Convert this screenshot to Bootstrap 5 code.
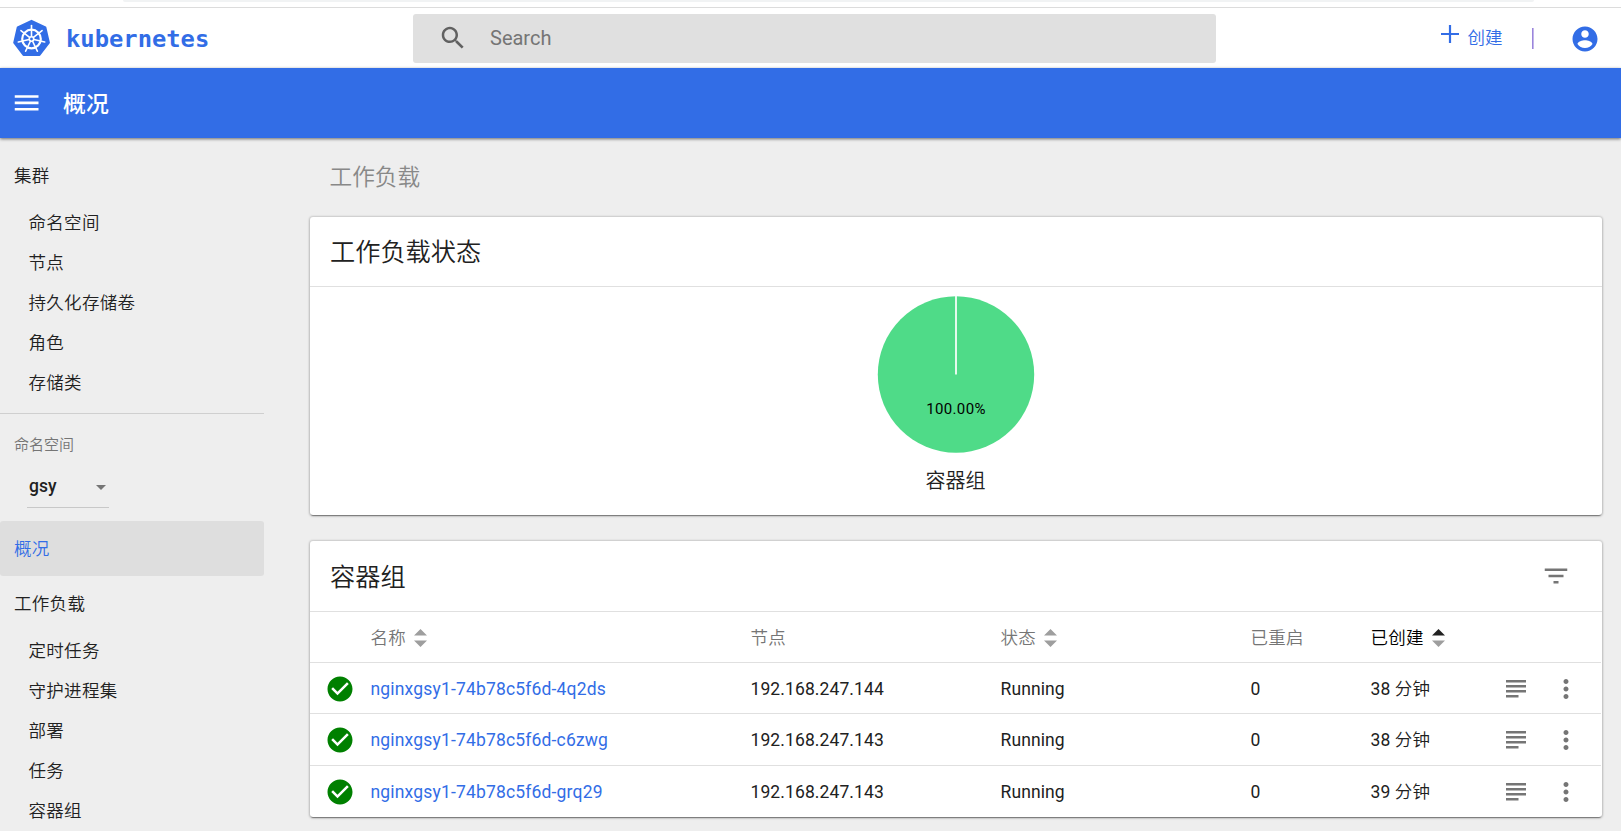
<!DOCTYPE html>
<html lang="zh-CN">
<head>
<meta charset="utf-8">
<title>Kubernetes Dashboard</title>
<link href="https://cdn.jsdelivr.net/npm/bootstrap@5.3.0/dist/css/bootstrap.min.css" rel="stylesheet">
<style>
:root{--kd-blue:#326de6}
body{font-family:Roboto,"Noto Sans CJK SC",sans-serif;font-size:17.5px;line-height:20px;background:#eee;color:#212121;height:831px;overflow:hidden}
svg{display:block;flex:none}
.kd-blue{color:var(--kd-blue)}
.kd-thin{font-weight:350}
.browser-edge{height:8px;border-bottom:1px solid #dcdcdc;background:#fff;padding:0 87px 0 123px}
.browser-edge div{height:2px;background:#f1f3f4;border-radius:0 0 8px 8px}
.top-header{height:60px;background:#fff;padding-left:12px;padding-right:21px}
.brand-text{font:bold 23.8px/30px "DejaVu Sans Mono",monospace;color:var(--kd-blue);margin-left:15px;padding-top:2px;width:347px}
.search-box{width:803px;height:49px;background:#e0e0e0;border-radius:3px;padding-left:25px;color:#757575;font-size:20px}
.title-bar{height:70px;background:var(--kd-blue);color:#fff;padding-left:11px;box-shadow:0 1px 3px rgba(0,0,0,.55);position:relative}
.title-bar h1{font-size:22.9px;font-weight:500;line-height:30px;margin:0 0 0 22px;padding-top:3px}
.side-nav{width:264px;padding-top:10px}
.side-nav a{display:flex;align-items:center;color:#212121;text-decoration:none;font-weight:350;letter-spacing:.3px}
.side-nav .group-link{height:55px;padding-left:14px}
.side-nav .sub-link{height:40px;padding-left:28.5px}
.side-nav .chosen{background:#dedede;border-radius:3px;color:var(--kd-blue)}
.ns-label{font-size:15px;color:#757575;height:20px;margin:21px 0 0 14px}
.ns-select{width:82px;height:40px;margin:13px 0 13px 27px;border-bottom:1px solid #c8c8c8;padding:0 3px 4px 2px;font-weight:500}
.content-col{width:1292px;margin-left:45.5px}
.section-title{font-size:22.7px;line-height:30px;color:#888;margin:25px 0 24px 20px;font-weight:350}
.kd-card{background:#fff;border-radius:3px;box-shadow:0 0 2px 1px rgba(0,0,0,.13),0 1px 3px rgba(0,0,0,.2),0 2px 1px -1px rgba(0,0,0,.35)}
.kd-card-head{height:70px;border-bottom:1px solid #e0e0e0;padding:0 30.5px 0 20.5px}
.kd-card-head h2{font-size:25.2px;line-height:30px;margin:0;padding-top:3px;font-weight:350}
.pod-card .kd-card-head{height:71px}
.pod-table{table-layout:fixed;width:1291px;border-collapse:separate;border-spacing:0;letter-spacing:.1px}
.pod-table td,.pod-table th{padding:0;vertical-align:middle;border-bottom:1px solid #e0e0e0;white-space:nowrap;height:51px}
.pod-table th{padding-top:2px}
.pod-table td{padding-top:1px}
.pod-table tr:nth-child(2) td{height:52px}
.pod-table tr:last-child td{border-bottom:0}
.pod-table th{font-weight:350;color:#757575;letter-spacing:.2px}
.pod-table th.sorted{color:#000}
.pod-table a{text-decoration:none;color:var(--kd-blue);letter-spacing:.17px}
.status-icon{margin-left:15px}
</style>
</head>
<body>
<svg width="0" height="0" class="d-none">
  <symbol id="i-check" viewBox="0 0 24 24"><path d="M12 2C6.48 2 2 6.48 2 12s4.48 10 10 10 10-4.48 10-10S17.52 2 12 2zm-2 15l-5-5 1.41-1.41L10 14.17l7.59-7.59L19 8l-9 9z"/></symbol>
  <symbol id="i-log" viewBox="0 0 24 24"><path d="M4 4.8h16v2H4zM4 8.8h16v2H4zM4 12.8h16v2H4zM4 16.8h10v2H4z"/></symbol>
  <symbol id="i-more" viewBox="0 0 24 24"><path d="M12 8c1.1 0 2-.9 2-2s-.9-2-2-2-2 .9-2 2 .9 2 2 2zm0 2c-1.1 0-2 .9-2 2s.9 2 2 2 2-.9 2-2-.9-2-2-2zm0 6c-1.1 0-2 .9-2 2s.9 2 2 2 2-.9 2-2-.9-2-2-2z"/></symbol>
</svg>

<div class="browser-edge"><div></div></div>

<header class="top-header d-flex align-items-center">
  <svg width="39" height="40" viewBox="0 0 39 40">
    <path fill="#326de6" stroke="#326de6" stroke-width="2" stroke-linejoin="round" d="M19.5 2.8 33.4 9.4 36.9 24.6 27.5 37 11.5 37 2.2 24.6 5.7 9.4z"/>
    <g fill="none" stroke="#fff" stroke-linecap="round">
      <circle cx="19.5" cy="21" r="9.3" stroke-width="2.2"/>
      <g stroke-width="1.6">
        <path id="spoke" d="M19.5 18.5V7.5"/>
        <use href="#spoke" transform="rotate(51.43 19.5 21)"/><use href="#spoke" transform="rotate(102.86 19.5 21)"/>
        <use href="#spoke" transform="rotate(154.29 19.5 21)"/><use href="#spoke" transform="rotate(205.71 19.5 21)"/>
        <use href="#spoke" transform="rotate(257.14 19.5 21)"/><use href="#spoke" transform="rotate(308.57 19.5 21)"/>
      </g>
      <circle cx="19.5" cy="21" r="2.2" stroke-width="1.6"/>
    </g>
  </svg>
  <div class="brand-text">kubernetes</div>
  <div class="search-box d-flex align-items-center">
    <svg width="30" height="30" viewBox="0 0 24 24" fill="#616161"><path d="M15.5 14h-.79l-.28-.27C15.41 12.59 16 11.11 16 9.5 16 5.91 13.09 3 9.5 3S3 5.91 3 9.5 5.91 16 9.5 16c1.61 0 3.09-.59 4.23-1.57l.27.28v.79l5 4.99L20.49 19l-4.99-5zm-6 0C7.01 14 5 11.99 5 9.5S7.01 5 9.5 5 14 7.01 14 9.5 11.99 14 9.5 14z"/></svg>
    <span style="margin-left:22px">Search</span>
  </div>
  <div class="ms-auto d-flex align-items-center kd-blue">
    <svg class="mb-2" width="18" height="18" viewBox="0 0 18 18" stroke="currentColor" stroke-width="2.2"><path d="M9 0v18M0 9h18"/></svg>
    <span class="kd-thin" style="margin-left:8.5px">创建</span>
    <svg width="2" height="21" style="margin-left:29.5px"><path fill="#9b85dc" d="M0 0h1.6v21H0z"/></svg>
    <svg style="margin-left:36px;margin-top:2px" width="30" height="30" viewBox="0 0 24 24" fill="currentColor"><path d="M12 2C6.48 2 2 6.48 2 12s4.48 10 10 10 10-4.48 10-10S17.52 2 12 2zm0 3c1.66 0 3 1.34 3 3s-1.34 3-3 3-3-1.34-3-3 1.34-3 3-3zm0 14.2c-2.5 0-4.71-1.28-6-3.22.03-1.99 4-3.08 6-3.08 1.99 0 5.97 1.09 6 3.08-1.29 1.94-3.5 3.22-6 3.22z"/></svg>
  </div>
</header>

<div class="title-bar d-flex align-items-center">
  <svg width="30" height="30" viewBox="0 0 24 24" fill="#fff"><path d="M3 18h19v-2.1H3V18zm0-5.1h19v-2.1H3v2.1zM3 5.7v2.1h19V5.7H3z"/></svg>
  <h1>概况</h1>
</div>

<div class="d-flex">
  <nav class="side-nav">
    <a class="group-link" href="#">集群</a>
    <a class="sub-link" href="#">命名空间</a>
    <a class="sub-link" href="#">节点</a>
    <a class="sub-link" href="#">持久化存储卷</a>
    <a class="sub-link" href="#">角色</a>
    <a class="sub-link" href="#">存储类</a>
    <div class="border-bottom" style="height:11px;--bs-border-color:#cfcfcf"></div>
    <div class="ns-label kd-thin">命名空间</div>
    <div class="ns-select d-flex align-items-center justify-content-between"><span>gsy</span>
      <svg class="mt-1" width="10" height="5" viewBox="0 0 10 5"><path fill="#757575" d="M0 0h10L5 5z"/></svg></div>
    <a class="group-link chosen" href="#">概况</a>
    <a class="group-link" href="#">工作负载</a>
    <a class="sub-link" href="#">定时任务</a>
    <a class="sub-link" href="#">守护进程集</a>
    <a class="sub-link" href="#">部署</a>
    <a class="sub-link" href="#">任务</a>
    <a class="sub-link" href="#">容器组</a>
  </nav>

  <main class="content-col">
    <div class="section-title">工作负载</div>
    <section class="kd-card" style="height:298px">
      <div class="kd-card-head d-flex align-items-center"><h2>工作负载状态</h2></div>
      <div class="d-flex flex-column align-items-center" style="padding-top:9px">
        <svg width="158" height="158" viewBox="0 0 158 158">
          <circle cx="79" cy="78.5" r="78.2" fill="#4fdb88"/>
          <path d="M79 0v78.5" stroke="#fff" stroke-width="1.7"/>
          <text x="79" y="118" text-anchor="middle" font-family="Roboto" font-size="15" letter-spacing=".35" fill="#000">100.00%</text>
        </svg>
        <div class="kd-thin" style="font-size:20px;line-height:24px;margin-top:15px">容器组</div>
      </div>
    </section>

    <section class="kd-card pod-card" style="height:276px;margin-top:26px">
      <div class="kd-card-head d-flex align-items-center justify-content-between"><h2>容器组</h2>
        <svg width="30" height="30" viewBox="0 0 24 24" fill="#757575"><path d="M10 18h4v-2h-4v2zM3 6v2h18V6H3zm3 7h12v-2H6v2z"/></svg></div>
      <table class="pod-table">
        <colgroup><col style="width:61px"><col style="width:380px"><col style="width:250px"><col style="width:250px"><col style="width:120px"><col style="width:130px"><col style="width:50px"><col style="width:50px"></colgroup>
        <thead><tr>
          <th></th>
          <th><div class="d-flex align-items-center">名称<svg style="margin-left:8px" width="13" height="18" viewBox="0 0 13 18"><path fill="#9e9e9e" d="M0 6.5h13L6.5 0zM0 11.5h13L6.5 18z"/></svg></div></th>
          <th>节点</th>
          <th><div class="d-flex align-items-center">状态<svg style="margin-left:8px" width="13" height="18" viewBox="0 0 13 18"><path fill="#9e9e9e" d="M0 6.5h13L6.5 0zM0 11.5h13L6.5 18z"/></svg></div></th>
          <th>已重启</th>
          <th class="sorted"><div class="d-flex align-items-center">已创建<svg style="margin-left:8px" width="13" height="18" viewBox="0 0 13 18"><path fill="#212121" d="M0 6.5h13L6.5 0z"/><path fill="#9e9e9e" d="M0 11.5h13L6.5 18z"/></svg></div></th>
          <th></th><th></th>
        </tr></thead>
        <tbody>
        <tr>
          <td><svg class="status-icon" width="30" height="30" fill="#008000"><use href="#i-check"/></svg></td>
          <td><a href="#">nginxgsy1-74b78c5f6d-4q2ds</a></td><td>192.168.247.144</td><td>Running</td><td>0</td><td>38 <span class="kd-thin">分钟</span></td>
          <td><svg width="30" height="30" fill="#757575"><use href="#i-log"/></svg></td>
          <td><svg width="30" height="30" fill="#757575"><use href="#i-more"/></svg></td>
        </tr>
        <tr>
          <td><svg class="status-icon" width="30" height="30" fill="#008000"><use href="#i-check"/></svg></td>
          <td><a href="#">nginxgsy1-74b78c5f6d-c6zwg</a></td><td>192.168.247.143</td><td>Running</td><td>0</td><td>38 <span class="kd-thin">分钟</span></td>
          <td><svg width="30" height="30" fill="#757575"><use href="#i-log"/></svg></td>
          <td><svg width="30" height="30" fill="#757575"><use href="#i-more"/></svg></td>
        </tr>
        <tr>
          <td><svg class="status-icon" width="30" height="30" fill="#008000"><use href="#i-check"/></svg></td>
          <td><a href="#">nginxgsy1-74b78c5f6d-grq29</a></td><td>192.168.247.143</td><td>Running</td><td>0</td><td>39 <span class="kd-thin">分钟</span></td>
          <td><svg width="30" height="30" fill="#757575"><use href="#i-log"/></svg></td>
          <td><svg width="30" height="30" fill="#757575"><use href="#i-more"/></svg></td>
        </tr>
        </tbody>
      </table>
    </section>
  </main>
</div>
<script src="https://cdn.jsdelivr.net/npm/bootstrap@5.3.0/dist/js/bootstrap.bundle.min.js"></script>
</body>
</html>
